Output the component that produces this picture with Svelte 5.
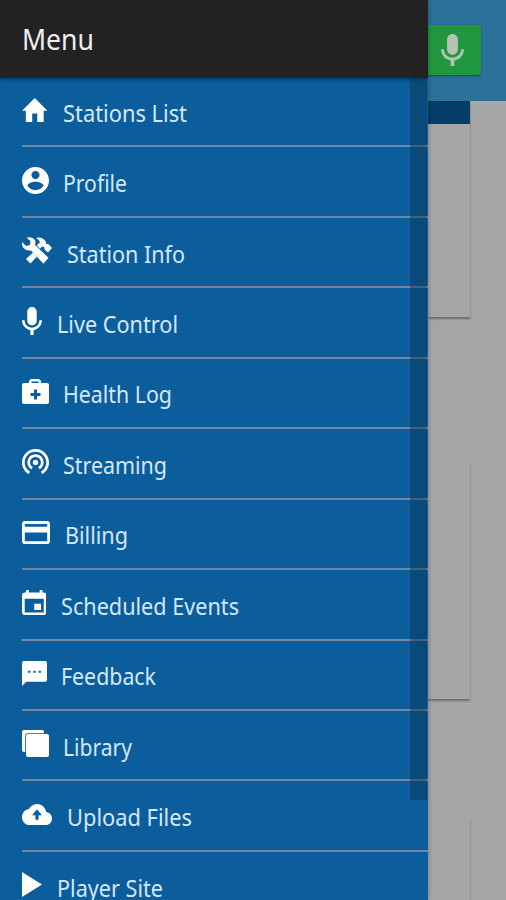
<script>
	// viewBox는 아이콘 모양에 딱 맞게 잘라낸 값
	const MIC = "M12 14.4c1.85 0 3.3-1.5 3.3-3.3V5.3C15.3 3.4 13.85 2 12 2S8.7 3.4 8.7 5.3v5.8c0 1.8 1.45 3.3 3.3 3.3zm5.2-3.4c0 2.9-2.44 5-5.2 5s-5.2-2.1-5.2-5H5c0 3.41 2.72 6.23 5.9 6.72V21h2.2v-3.28c3.18-.48 5.9-3.3 5.9-6.72h-1.8z";

	const items = [
		{ title: "Stations List", w: 25.5, h: 24, gap: 15.5, len: 124, box: "2 3 20 17", path: "M10 20v-6h4v6h5v-8h3L12 3 2 12h3v8z" },
		{ title: "Profile", w: 27, h: 27, gap: 14, len: 64, box: "2 2 20 20", path: "M12 2C6.48 2 2 6.48 2 12s4.48 10 10 10 10-4.48 10-10S17.52 2 12 2zm0 3c1.66 0 3 1.34 3 3s-1.34 3-3 3-3-1.34-3-3 1.34-3 3-3zm0 14.2c-2.5 0-4.71-1.28-6-3.22.03-1.99 4-3.08 6-3.08 1.99 0 5.97 1.09 6 3.08-1.29 1.94-3.5 3.22-6 3.22z" },
		{ title: "Station Info", w: 30, h: 27, gap: 15, len: 118, box: "0 0 30 27", path: "M0 5l4 4 4-1 .5-4-4-3.2Q10-1 13 3q1 3 0 5l13.5 12.7-5 6L9 13.5q-5 .5-7.5-2.5Q-.5 8 0 5zM14 1q5-1.5 8.5 2L24 5v2.3l2-.5 4 4.2-4 4.5-3.5-3v-2l-2.5-1-2 2.2-3.3-3.2L18 5.2Q17 2.5 14 1zM11 15.5l4 4L8.5 26.5 4 22z" },
		{ title: "Live Control", w: 20, h: 28, gap: 15, len: 121, box: "5 2 14 19", path: MIC },
		{ title: "Health Log", w: 27, h: 25, gap: 14, len: 109, box: "0 0 27 25", path: "M7 4V2l2-2h8l2 2v2h6a2 2 0 0 1 2 2v17a2 2 0 0 1-2 2H2a2 2 0 0 1-2-2V6a2 2 0 0 1 2-2zM9.5 2.5V4h7V2.5zM12 10.500v3.500H8.500v3H12v3.500h3V17h3.500v-3H15v-3.500z" },
		{ title: "Streaming", w: 27, h: 25, gap: 14, len: 104, box: "2 3 20 18.65", path: "M12 11c-1.1 0-2 .9-2 2s.9 2 2 2 2-.9 2-2-.9-2-2-2zm6 2c0-3.31-2.69-6-6-6s-6 2.69-6 6c0 2.22 1.21 4.15 3 5.19l1-1.74c-1.19-.7-2-1.97-2-3.45 0-2.21 1.79-4 4-4s4 1.79 4 4c0 1.48-.81 2.75-2 3.45l1 1.74c1.79-1.04 3-2.97 3-5.19zM12 3C6.48 3 2 7.48 2 13c0 3.7 2.01 6.92 4.99 8.65l1-1.73C5.61 18.53 4 15.96 4 13c0-4.42 3.58-8 8-8s8 3.58 8 8c0 2.96-1.61 5.53-4 6.92l1 1.73c2.99-1.73 5-4.95 5-8.65 0-5.52-4.48-10-10-10z" },
		{ title: "Billing", w: 28, h: 23, gap: 15, len: 63, box: "2 4 20 16", path: "M20 4H4c-1.11 0-2 .89-2 2v12c0 1.11.89 2 2 2h16c1.11 0 2-.89 2-2V6c0-1.11-.89-2-2-2zm0 14H4v-6h16v6zm0-10H4V6h16v2z" },
		{ title: "Scheduled Events", w: 24.5, h: 25, gap: 14.5, len: 178, box: "3 1 18 20", path: "M17 12h-5v5h5v-5zM16 1v2H8V1H6v2H5c-1.11 0-2 .9-2 2v14c0 1.1.89 2 2 2h14c1.1 0 2-.9 2-2V5c0-1.1-.9-2-2-2h-1V1h-2zm3 18H5V8h14v11z" },
		{ title: "Feedback", w: 25, h: 25, gap: 14, len: 95, box: "2 2 20 20", path: "M20.500 2H3.500Q2 2 2 3.500V22l3.500-3.500h15q1.500 0 1.500-1.500V3.500Q22 2 20.500 2zM8.700 11.300H6.900V9.700h1.800zM12.900 11.300h-1.800V9.700h1.800zM17.100 11.300h-1.800V9.700h1.800z" },
		{ title: "Library", w: 27, h: 27, gap: 14, len: 69, box: "0 0 27 27", path: "M2 0h18a2 2 0 0 1 2 2v1.200H6a3 3 0 0 0-2.800 3V22H2a2 2 0 0 1-2-2V2a2 2 0 0 1 2-2zM6 4h19a2 2 0 0 1 2 2v19a2 2 0 0 1-2 2H6a2 2 0 0 1-2-2V6a2 2 0 0 1 2-2z" },
		{ title: "Upload Files", w: 30, h: 21, gap: 15, len: 125, box: "0 4 24 16", path: "M19.35 10.04C18.67 6.59 15.64 4 12 4 9.11 4 6.6 5.64 5.35 8.04 2.34 8.36 0 10.91 0 14c0 3.31 2.69 6 6 6h13c2.76 0 5-2.24 5-5 0-2.64-2.05-4.78-4.65-4.96zM13.300 12.500v3.500h-2.600v-3.500H8l4-4.500 4 4.500z" },
		{ title: "Player Site", w: 20, h: 25, gap: 15, len: 106, box: "0 0 20 25", path: "M0 0l20 12.5L0 25z" },
	];
</script>

<main class="app">
	<!-- 메뉴 -->
	<aside class="menu">
		<header class="menu__header">
			<svg class="menu__title" width="90" height="40"><text x="0" y="28" textLength="72" lengthAdjust="spacingAndGlyphs">Menu</text></svg>
		</header>
		<nav class="menu__list">
			{#each items as item}
				<a class="menu__item" href="#top">
					<svg class="menu__icon" width={item.w} height={item.h} viewBox={item.box} preserveAspectRatio="none">
						<path fill-rule="evenodd" d={item.path} />
					</svg>
					<svg class="menu__label" style:margin-left="{item.gap}px" width={item.len + 4} height="34">
						<text x="0" y="25.5" textLength={item.len} lengthAdjust="spacingAndGlyphs">{item.title}</text>
					</svg>
				</a>
			{/each}
		</nav>
		<div class="menu__scrollbar"></div>
	</aside>
	<!-- 메뉴 뒤에 가려진 페이지 -->
	<section class="page">
		<header class="page__header">
			<button class="page__mic" aria-label="Live">
				<svg width="23" height="32" viewBox="5 2 14 19" preserveAspectRatio="none"><path d={MIC} /></svg>
			</button>
		</header>
		<article class="page__card page__card--first"></article>
		<article class="page__card page__card--second"></article>
		<article class="page__card page__card--third"></article>
	</section>
</main>

<style>
	:global(body) {
		background: #a6a6a6;
		overflow: hidden;
	}
	.app {
		display: flex;
		width: 506px;
		height: 900px;
		overflow: hidden;
		background: #a6a6a6;
		font-family: "Noto Sans", "Open Sans", sans-serif;
	}
	.menu {
		position: relative;
		z-index: 1;
		width: 428px;
		height: 900px;
		flex: none;
		overflow: hidden;
		background: #0c5d9c;
		box-shadow: 0 0 5px rgba(0, 0, 0, 0.3);
	}
	.menu__header {
		position: relative;
		display: flex;
		box-sizing: border-box;
		height: 78px;
		padding: 21.5px 22px;
		background: #222;
		box-shadow: 0 1px 4px rgba(0, 0, 0, 0.5);
	}
	.menu__title {
		font-size: 29px;
		fill: #eee;
	}
	.menu__list {
		margin-top: -1px;
		padding-left: 21.6px;
	}
	.menu__item {
		display: flex;
		align-items: center;
		box-sizing: border-box;
		height: 70.45px;
		padding-bottom: 3px;
		border-bottom: 2px solid #7488a4;
	}
	.menu__icon {
		flex: none;
		fill: #fff;
	}
	.menu__label {
		flex: none;
		margin-top: 6px;
		overflow: visible;
		font-size: 23.5px;
		fill: #d5e8fa;
	}
	.menu__scrollbar {
		position: absolute;
		top: 78px;
		right: 1px;
		width: 17px;
		height: 722px;
		background: rgba(8, 48, 80, 0.45);
	}
	.page {
		flex: 1;
	}
	.page__header {
		box-sizing: border-box;
		height: 101px;
		padding-top: 25px;
		background: #2c7199;
	}
	.page__mic {
		display: flex;
		align-items: center;
		justify-content: center;
		width: 53px;
		height: 50px;
		padding: 0 5px 0 0;
		border: none;
		border-radius: 0 3px 3px 0;
		background: #20973f;
		box-shadow: 0 1px 2px rgba(0, 0, 0, 0.4);
		fill: #b5c3b6;
	}
	.page__card {
		box-sizing: border-box;
		width: 42px;
		background: #a6a6a6;
		box-shadow: 0 2px 2px rgba(0, 0, 0, 0.35);
	}
	.page__card--first {
		height: 216px;
		border-top: 23px solid #043d67;
	}
	.page__card--second {
		height: 238px;
		margin-top: 144px;
	}
	.page__card--third {
		height: 120px;
		margin-top: 119px;
	}
</style>
